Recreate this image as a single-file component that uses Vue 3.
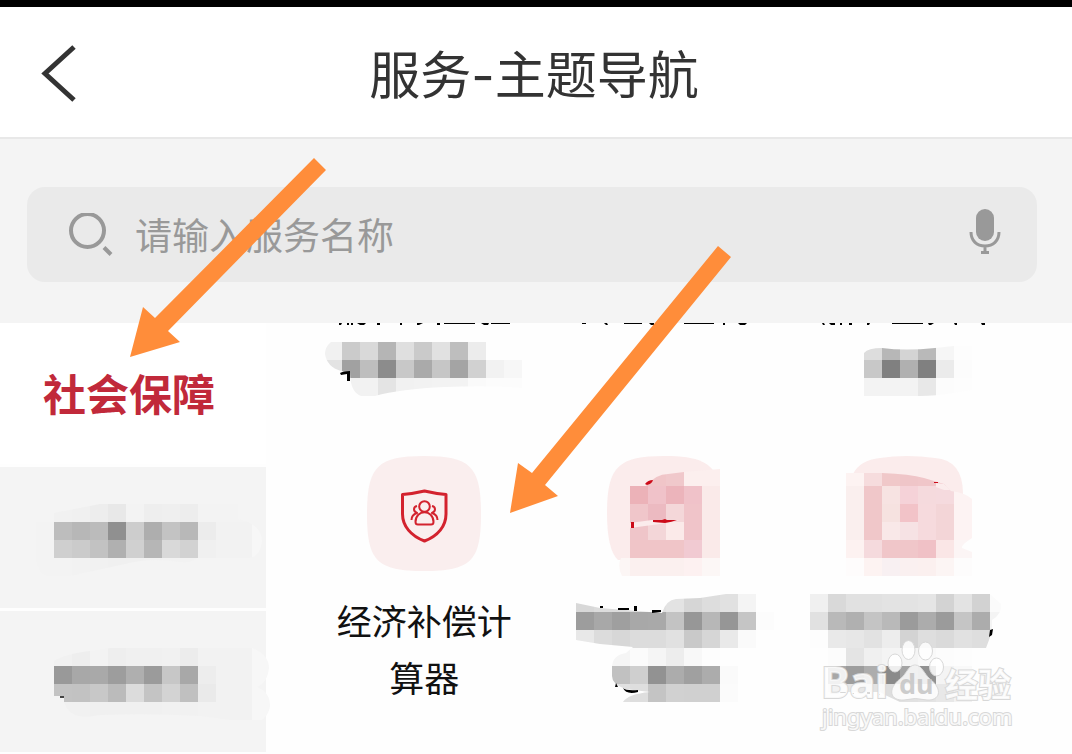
<script setup>
import { ref } from 'vue'

const keyword = ref('')
const CELL = 18

// Each row: [x, y, 'colour colour ...'] with two-digit greys or six-digit colours
function cells(rows) {
  return rows.flatMap(([x, y, list]) =>
    list.split(' ').map((c, i) => ({
      x: x + i * CELL,
      y,
      fill: '#' + (c.length === 2 ? c + c + c : c),
    }))
  )
}

const sideItems = [
  {
    id: 'side-a',
    label: '分类二',
    box: '0 467 266 141',
    clip: 'M36 522 H54 V513 L100 504 H238 V519 Q262 524 262 542 Q260 556 250 558 H197 Q192 563 180 562 Q150 557 125 564 L70 576 Q54 580 42 574 Q34 566 36 540 Z',
    cells: cells([
      [54, 504, 'f1 f0 ed e8 f3 ee ef ed f3 f3 f3'],
      [36, 522, 'f3 bd b7 bb 90 cd ae c3 b8 ec f2 f2 f7'],
      [36, 540, 'f3 cf cb c2 b0 d0 b6 d9 d2 f0 f2 f2 f7'],
      [36, 558, 'f3 f3 f2 f1 f0 f0 f1 f2 f2'],
    ]),
    marks: '',
  },
  {
    id: 'side-b',
    label: '分类三',
    box: '0 611 266 141',
    clip: 'M54 661 Q65 654 90 651 L110 648 H252 Q269 655 269 668 Q268 682 257 687 Q270 692 270 706 Q268 720 254 723 L200 716 Q150 713 100 715 Q70 722 64 702 V696 H54 Z',
    cells: cells([
      [54, 648, 'f1 ee f3 ee f0 f0 f1 ec f2 f2 f2 f7'],
      [54, 666, '99 a8 a9 9d af 9b c7 a8 ed f2 f2 f7'],
      [54, 684, 'c3 c2 c8 bb dc c4 d3 c0 ea f2 f2 f7'],
      [54, 702, 'f1 f1 f0 f0 f0 f0 f1 f1 f2 f2 f2 f7'],
    ]),
    marks: 'M60 696 H64 V698 H60 Z',
  },
]

const topItems = [
  {
    id: 'top-a',
    label: '服务一',
    box: '304 323 240 133',
    clip: 'M331 342 Q325 347 325 354 Q327 367 341 371 L350 372 Q350 392 361 396 H375 Q400 389 445 387 Q490 385 522 388 V342 Z',
    cells: cells([
      [324, 342, 'f1 cb d9 b5 df ca e1 be ec'],
      [324, 360, 'e3 a1 be 8c c8 aa c6 a4 d1 f2 f7'],
      [342, 378, 'f1 f2 e4 f1 f2 f3 f3 fa fc fc'],
    ]),
    marks:
      'M339 323 h3 l-1 2 h-2 Z M347 323 h2 v2 h-2 Z M351 323 h2 v2 h-2 Z M357 323 h9 l-2 2 h-4 Z M377 323 h3 v2 h-3 Z M400 323 h2 v2 h-2 Z M417 323 h6 l-4 2 h-2 Z M437 323 h3 v2 h-3 Z M444 323 h31 v1 h-31 Z M481 323 h8 l-1 2 h-4 Z M491 323 h19 v1 h-19 Z M340 373 Q343 371 350 371 V381 H347 V374 L341 375 Z',
  },
  {
    id: 'top-b',
    label: '服务二',
    box: '544 323 240 133',
    clip: 'M544 323 Z',
    cells: [],
    marks:
      'M582 323 h4 v1 h-4 Z M604 323 h3 l1 2 h-2 Z M624 323 h18 v1 h-18 Z M649 323 h5 v2 h-3 Z M661 323 h15 v1 h-15 Z M684 323 h30 v1 h-30 Z M723 323 h2 v2 h-2 Z M738 323 h9 l-2 2 h-5 Z',
  },
  {
    id: 'top-c',
    label: '服务三',
    box: '785 323 240 133',
    clip: 'M864 353 Q868 348 882 348 Q905 351 935 348 L954 346 H972 V390 L954 393 Q935 396 920 396 H864 Z',
    cells: cells([
      [864, 342, 'dd b7 d4 b9 f6 fd'],
      [864, 360, 'c8 80 b0 80 eb fc'],
      [864, 378, 'f3 f3 f3 e8 fc fd'],
    ]),
    marks:
      'M822 323 h2 l1 2 h-2 Z M829 323 h6 v2 h-4 Z M840 323 h2 v2 h-2 Z M849 323 h3 v2 h-3 Z M867 323 h3 l-1 2 h-2 Z M892 323 h31 v1 h-31 Z M928 323 h6 l-3 2 h-2 Z M954 323 h3 v2 h-2 Z M981 323 h4 v2 h-3 Z',
  },
]

const coveredItems = [
  {
    id: 'mid-b',
    label: '服务五',
    box: '544 456 240 252',
    tile: 'M607 513 C607 467 618 456 664 456 C700 456 712 463 718 480 V560 H618 Q607 550 607 513 Z',
    iconClip: 'M630 486 H646 Q656 474 668 474 L684 472 L720 469 V576 H622 Q617 566 621 558 H630 Z',
    iconCells: cells([
      [630, 468, 'eebfc2 f0c5c8 f0c8cb fcefee fcefee'],
      [630, 486, 'ecb2b8 f0c2c9 ecb4bb f0c2c9 faeae9'],
      [630, 504, 'f0c6ca ecbac1 f4d7d9 f0c4c9 faeae9'],
      [630, 522, 'efc5c9 f3d6d8 fbeae9 f0c4c9 faeae9'],
      [630, 540, 'f0c5c8 f0c5c8 f0c5c8 f1cad2 faeae9'],
      [612, 558, 'fcf6f5 fbf0ef fbf0ef fbf0ef fdf1f1 fcf7f6'],
    ]),
    gap: 'M630 523 L652 520 H680 L660 524 L630 528 Z',
    red: 'M645 484 Q648 480 653 480 Q652 484 647 485 Z M631 522 H634 V528 H631 Z M653 520 H662 L665 519 L667 520 L677 520 Q672 522 665 523 L653 522 Z',
    clip: 'M576 603 L600 608 L662 613 Q666 600 676 599 L700 598 L726 594 H774 V702 H623 Q628 694 650 692 L625 689 Q612 684 612 676 V666 Q613 655 626 653 L633 647 L600 644 L576 640 Z',
    cells: cells([
      [576, 594, 'd8 dc dc dc e0 e3 d6 dd e1 f4'],
      [576, 612, '9d a8 9f a8 a9 c3 97 b7 96 c5 fc'],
      [576, 630, 'e8 dc d7 dc dc e1 c9 d6 e9 fa'],
      [612, 648, 'f5 fb f5 ed f8 fd'],
      [612, 666, 'c1 cf 92 ac a0 ac fa'],
      [612, 684, 'e0 de c4 d1 d0 d0 fb'],
    ]),
    marks:
      'M600 606 h3 v2 h-3 Z M618 608 h11 v2 h-11 Z M634 606 h3 v5 h-3 Z M652 610 h9 v2 l-9 1 Z M616 683 l2 4 h-3 Z M623 688 Q626 691 638 690 V692 Q626 695 623 688 Z',
  },
  {
    id: 'mid-c',
    label: '服务六',
    box: '785 456 240 252',
    tile: 'M853 474 Q860 460 880 458 Q906 454 935 458 Q963 460 963 494 L962 546 L855 540 Z',
    iconClip: 'M846 473 H882 Q910 474 924 478 L944 484 L951 491 Q966 493 972 499 V538 Q961 545 962 548 L972 552 V576 H846 Z',
    iconCells: cells([
      [846, 468, 'fdf3f2 f6dcdd f0c8c9 efc5c8 f0c6c9 f1c6ca'],
      [846, 486, 'faefee f0c7c9 f7e3e2 f5d2d8 f5dadd f5dade fdf3f3'],
      [846, 504, 'faefee f0c7c9 f6e2e0 f2c3c8 f6dadd f3d5d7 fdf3f3'],
      [846, 522, 'faefee f0c7c9 f9e8e8 f6e2e4 f6dadd f3d5d7 fdf3f3'],
      [846, 540, 'fdf2f1 f5dadd f0c6c9 f0c6c9 f0c1c6 fae6e6 fcf5f5'],
      [846, 558, 'fefcfc fdf3f2 f8f0f2 faf0f0 fbf0ef fcf5f4 fdfcfc'],
    ]),
    gap: 'M936 483 L944 484 L950 490 H944 L936 487 Z',
    red: 'M934 482 H938 V483 H934 Z',
    clip: 'M810 594 H990 L1001 604 Q1002 614 992 620 V632 L986 648 H974 V702 H900 L885 695 L880 692 H828 V648 H810 Z',
    cells: cells([
      [810, 594, 'f0 d9 e1 e1 e3 e3 e5 d3 e3 d2 fb'],
      [810, 612, 'e1 b9 b0 c4 b9 9b ac 9b c5 ac f4'],
      [810, 630, 'fd e9 e7 e2 ed d3 de da e1 de'],
      [828, 648, 'fc e4 f0 f4 f5 f9 fc fd'],
      [828, 666, 'a8 9d ad 8a a4 91 f4 f9'],
      [828, 684, 'f2 e6 e2 de e2 e4 e8 f2'],
    ]),
    marks:
      'M990 630 L993 629 L992 635 L989 637 Z M840 692 h6 v1 h-6 Z M852 693 h2 v1 h-2 Z M867 692 h3 v2 h-3 Z M878 694 h2 v1 h-2 Z',
  },
]
</script>

<template>
  <div class="page">
    <div class="status"></div>

    <header class="header">
      <button class="back" type="button" aria-label="返回">
        <svg width="36" height="58" viewBox="0 0 36 58">
          <path d="M34 2 L5 28.500 L34 55" />
        </svg>
      </button>
      <h1 class="title">服务-主题导航</h1>
      <span class="spacer"></span>
    </header>

    <div class="search-area">
      <form class="search" role="search" @submit.prevent>
        <svg class="glass" width="44" height="44" viewBox="0 0 44 44" aria-hidden="true">
          <circle cx="18.500" cy="17.500" r="16.500" />
          <path d="M35 34.500 L42 41.500" />
        </svg>
        <input v-model="keyword" class="field" type="text" placeholder="请输入服务名称" aria-label="请输入服务名称" />
        <button class="mic" type="button" aria-label="语音输入">
          <svg width="32" height="46" viewBox="0 0 32 46">
            <rect x="7" y="0" width="18" height="32" rx="9" fill="#999" />
            <path d="M2 23 C2 32 8 37 16 37 C24 37 30 32 30 23 M16 37 V43 M12 43.500 H20" fill="none" stroke="#999" stroke-width="3" />
          </svg>
        </button>
      </form>
    </div>

    <main class="content">
      <nav class="side">
        <button class="side-item active" type="button">社会保障</button>
        <button v-for="item in sideItems" :key="item.id" class="side-item" type="button" :aria-label="item.label">
          <svg class="side-art" :viewBox="item.box" width="266" height="141">
            <clipPath :id="item.id"><path :d="item.clip" /></clipPath>
            <g :clip-path="`url(#${item.id})`" shape-rendering="crispEdges">
              <rect v-for="c in item.cells" :key="`${c.x}-${c.y}`" :x="c.x" :y="c.y" width="18" height="18" :fill="c.fill" />
            </g>
            <path :d="item.marks" fill="#444" />
          </svg>
        </button>
      </nav>

      <section class="services">
        <button v-for="item in topItems" :key="item.id" class="service" type="button" :aria-label="item.label">
          <svg :viewBox="item.box" width="240" height="133">
            <clipPath :id="item.id"><path :d="item.clip" /></clipPath>
            <g :clip-path="`url(#${item.id})`">
              <rect v-for="c in item.cells" :key="`${c.x}-${c.y}`" :x="c.x" :y="c.y" width="18" height="18" :fill="c.fill" shape-rendering="crispEdges" />
            </g>
            <path :d="item.marks" fill="#000" />
          </svg>
        </button>

        <button class="service" type="button">
          <svg class="tile" width="116" height="116" viewBox="366 456 116 116" aria-hidden="true">
            <path d="M367 514 C367 467 377 456 424 456 C471 456 481 467 481 514 C481 561 471 571 424 571 C377 571 367 561 367 514 Z" fill="#faeeee" />
            <g fill="none" stroke="#d3222e" stroke-linejoin="round">
              <path d="M402.500 494.500 Q414 493.500 424.500 491 Q435 493.500 446 494.500 V514 C446 526 438 536 424.500 541 C411 536 402.500 526 402.500 514 Z" stroke-width="3" />
              <circle cx="424.500" cy="506.500" r="5.300" stroke-width="2" />
              <path d="M415.500 522 C415.500 509 433.500 509 433.500 522 Q433.500 524.500 431 524.500 H418 Q415.500 524.500 415.500 522 Z" stroke-width="2" />
              <path d="M417 506 C413 507 413 511 417 513 C414 514 411.500 516 411.500 520 M432 506 C436 507 436 511 432 513 C435 514 437.500 516 437.500 520" stroke-width="2" />
            </g>
          </svg>
          <span class="label">经济补偿计算器</span>
        </button>

        <button v-for="item in coveredItems" :key="item.id" class="service" type="button" :aria-label="item.label">
          <svg :viewBox="item.box" width="240" height="252">
            <clipPath :id="item.id"><path :d="item.clip" /></clipPath>
            <clipPath :id="`${item.id}-icon`"><path :d="item.iconClip" /></clipPath>
            <path :d="item.tile" fill="#fbecec" />
            <g :clip-path="`url(#${item.id}-icon)`">
              <rect v-for="c in item.iconCells" :key="`${c.x}-${c.y}`" :x="c.x" :y="c.y" width="18" height="18" :fill="c.fill" shape-rendering="crispEdges" />
            </g>
            <path :d="item.gap" fill="#fbecec" />
            <path :d="item.red" fill="#cc0a18" />
            <g :clip-path="`url(#${item.id})`">
              <rect v-for="c in item.cells" :key="`${c.x}-${c.y}`" :x="c.x" :y="c.y" width="18" height="18" :fill="c.fill" shape-rendering="crispEdges" />
            </g>
            <path :d="item.marks" fill="#000" />
          </svg>
        </button>
      </section>
    </main>

    <svg class="notes" width="1072" height="754" viewBox="0 0 1072 754">
      <g fill="#ff8d3a">
        <path d="M130 357 L143 307 L155 318 L314 158 L326 170 L168 331 L180 342 Z" />
        <path d="M510 513 L518 463 L532 473 L718 246 L731 257 L545 485 L558 496 Z" />
      </g>
      <g class="mark">
        <text x="821" y="698" class="mark-big">Bai</text>
        <ellipse cx="908.500" cy="650" rx="6.500" ry="9.500" />
        <ellipse cx="925.500" cy="651" rx="7" ry="9" />
        <ellipse cx="895" cy="663" rx="7" ry="9" />
        <ellipse cx="936.500" cy="667" rx="7" ry="9" />
        <path d="M915 665 C922 665 924 674 930 679 C944 690 939 701 927 700 Q915 697 904 700 C890 701 887 689 900 679 C907 674 908 665 915 665 Z" />
        <text x="899" y="694" class="mark-du">du</text>
        <text x="945" y="697" class="mark-cn">经验</text>
        <text x="822" y="725" class="mark-url">jingyan.baidu.com</text>
      </g>
    </svg>
  </div>
</template>

<style>
body {
  background: #fefefe;
}
</style>

<style scoped>
.page {
  position: relative;
  overflow: hidden;
  background: #fefefe;
  font-family: "Noto Sans CJK SC", sans-serif;
}
button {
  border: 0;
  padding: 0;
  margin: 0;
  background: none;
  font: inherit;
  color: inherit;
  cursor: pointer;
}
svg {
  display: block;
}
.status {
  height: 7px;
  background: #000;
}
.header {
  display: flex;
  align-items: center;
  justify-content: space-between;
  height: 130px;
  padding: 0 44px 0 40px;
  background: #fff;
  border-bottom: 2px solid #e8e8e8;
}
.back,
.spacer {
  width: 40px;
}
.back {
  padding-top: 3px;
}
.back path {
  fill: none;
  stroke: #333;
  stroke-width: 5;
}
.title {
  margin: 0;
  padding-top: 8px;
  font-family: Inter, "Noto Sans CJK SC", sans-serif;
  font-size: 51px;
  font-weight: 400;
  line-height: 74px;
  color: #333;
}
.search-area {
  padding: 48px 35px 41px 27px;
  background: #f4f4f4;
}
.search {
  display: flex;
  align-items: center;
  height: 95px;
  padding: 0 36px 0 42px;
  box-sizing: border-box;
  border-radius: 18px;
  background: #eaeaea;
}
.glass {
  flex: none;
  fill: none;
  stroke: #999;
  stroke-width: 4;
}
.field {
  flex: 1;
  min-width: 0;
  height: 60px;
  margin-left: 22px;
  padding: 0 0 2px;
  border: 0;
  outline: 0;
  background: none;
  font-family: inherit;
  font-size: 37px;
  color: #333;
}
.field::placeholder {
  color: #999;
  opacity: 1;
}
.mic {
  padding-bottom: 6px;
}
.content {
  display: flex;
  align-items: flex-start;
}
.side {
  flex: none;
  display: flex;
  flex-direction: column;
  gap: 3px;
  width: 266px;
}
.side-item {
  height: 141px;
  background: #f4f4f4;
}
.side-item.active {
  padding: 0 8px 4px 0;
  background: #fff;
  color: #c1293a;
  font-size: 43px;
  font-weight: 700;
}
.side-art {
  overflow: visible;
}
.services {
  flex: 1;
  display: grid;
  grid-template-columns: repeat(3, 1fr);
  padding: 0 47px 0 38px;
}
.service {
  display: flex;
  flex-direction: column;
  align-items: center;
}
.label {
  width: 176px;
  margin-top: 19px;
  margin-bottom: 3px;
  font-size: 35px;
  line-height: 57px;
  color: #111;
}
.notes {
  position: absolute;
  top: 0;
  left: 0;
  pointer-events: none;
}
.mark {
  fill: #fff;
  fill-opacity: 0.85;
  stroke: #d8d8d8;
  stroke-width: 1;
}
.mark text {
  paint-order: stroke;
  stroke-width: 2;
}
.mark-big {
  font: 700 43px "Noto Sans", sans-serif;
}
.mark .mark-du {
  font: 700 27px "Noto Sans", sans-serif;
  fill: #c4c4c4;
  stroke: none;
}
.mark-cn {
  font: 700 33px/1 "Noto Sans CJK SC", sans-serif;
}
.mark-url {
  font: 400 22px/1 "Noto Sans", sans-serif;
}
</style>
